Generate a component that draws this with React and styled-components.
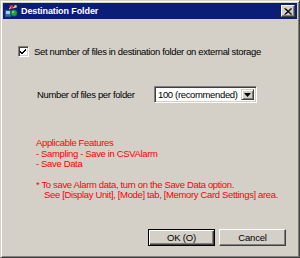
import React, { useState } from "react";
import styled, { createGlobalStyle } from "styled-components";

const GlobalStyle = createGlobalStyle`
  html, body {
    margin: 0;
    padding: 0;
    background: #d4d0c8;
  }
  body {
    font-family: "Liberation Sans", Arial, sans-serif;
    font-size: 9.5px;
    letter-spacing: -0.35px;
  }
`;

const Window = styled.div`
  box-sizing: border-box;
  width: 300px;
  height: 258px;
  background: #d4d0c8;
  border-top: 1px solid #d4d0c8;
  border-left: 1px solid #d4d0c8;
  border-right: 1px solid #404040;
  border-bottom: 1px solid #404040;
  box-shadow: inset 1px 1px 0 #ffffff, inset -1px -1px 0 #808080;
  padding: 2px;
  display: flex;
  flex-direction: column;
`;

const TitleBar = styled.div`
  height: 16px;
  background: #0a1e78;
  display: flex;
  align-items: center;
  padding: 0 1px 0 1px;
  gap: 3px;
`;

const Title = styled.div`
  flex: 1;
  color: #ffffff;
  font-family: "Liberation Sans", Tahoma, sans-serif;
  font-weight: bold;
  font-size: 9px;
  letter-spacing: -0.1px;
`;

const CloseButton = styled.div`
  box-sizing: border-box;
  width: 14px;
  height: 12px;
  background: #d4d0c8;
  border-top: 1px solid #ffffff;
  border-left: 1px solid #ffffff;
  border-right: 1px solid #404040;
  border-bottom: 1px solid #404040;
  box-shadow: inset -1px -1px 0 #808080;
  display: flex;
  align-items: center;
  justify-content: center;
  margin-right: 1px;
`;

const Body = styled.div`
  flex: 1;
  display: flex;
  flex-direction: column;
  padding: 26px 0 0 15px;
  color: #000000;
`;

const CheckRow = styled.label`
  display: flex;
  align-items: center;
  gap: 5px;
  height: 13px;
  white-space: nowrap;
`;

const CheckBox = styled.div`
  box-sizing: border-box;
  width: 11px;
  height: 11px;
  background: #ffffff;
  border-top: 1px solid #808080;
  border-left: 1px solid #808080;
  border-right: 1px solid #ffffff;
  border-bottom: 1px solid #ffffff;
  box-shadow: inset 1px 1px 0 #404040, inset -1px -1px 0 #d4d0c8;
  display: flex;
  align-items: center;
  justify-content: center;
`;

const FieldRow = styled.div`
  display: flex;
  align-items: center;
  margin: 28px 0 0 19px;
  height: 17px;
`;

const FieldLabel = styled.div`
  width: 117px;
  white-space: nowrap;
`;

const Select = styled.div`
  box-sizing: border-box;
  width: 103px;
  height: 17px;
  background: #ffffff;
  border-top: 1px solid #808080;
  border-left: 1px solid #808080;
  border-right: 1px solid #ffffff;
  border-bottom: 1px solid #ffffff;
  box-shadow: inset 1px 1px 0 #404040, inset -1px -1px 0 #d4d0c8;
  display: flex;
  align-items: center;
  padding: 2px 2px 2px 3px;
`;

const SelectText = styled.div`
  flex: 1;
  white-space: nowrap;
`;

const DropButton = styled.div`
  box-sizing: border-box;
  width: 13px;
  height: 11px;
  background: #d4d0c8;
  border-top: 1px solid #d4d0c8;
  border-left: 1px solid #d4d0c8;
  border-right: 1px solid #404040;
  border-bottom: 1px solid #404040;
  box-shadow: inset 1px 1px 0 #ffffff, inset -1px -1px 0 #808080;
  display: flex;
  align-items: center;
  justify-content: center;
`;

const Notes = styled.div`
  margin: 35px 0 0 18px;
  color: #ff0000;
  line-height: 10.5px;
`;

const NoteLine = styled.div`
  padding-left: ${(p) => (p.$indent ? "8px" : "0")};
  margin-top: ${(p) => (p.$gap ? "10px" : "0")};
  white-space: nowrap;
`;

const Footer = styled.div`
  display: flex;
  justify-content: flex-end;
  gap: 4px;
  padding: 0 11px 9px 0;
  margin-top: auto;
`;

const Button = styled.button`
  box-sizing: border-box;
  width: 67px;
  height: 17px;
  padding: 0;
  font-family: "Liberation Sans", Arial, sans-serif;
  font-size: 9.5px;
  letter-spacing: -0.2px;
  color: #000000;
  background: #d4d0c8;
  border: 1px solid;
  border-color: ${(p) =>
    p.$default ? "#000000" : "#ffffff #404040 #404040 #ffffff"};
  box-shadow: ${(p) =>
    p.$default
      ? "inset 1px 1px 0 #ffffff, inset -1px -1px 0 #404040, inset -2px -2px 0 #808080"
      : "inset -1px -1px 0 #808080"};
`;

const AppIcon = () => (
  <svg width="14" height="14" viewBox="0 0 14 14">
    <rect x="1" y="6" width="6" height="7" fill="#3a6ea5" stroke="#1c3a6a" strokeWidth="0.8" />
    <rect x="2" y="7" width="4" height="3" fill="#a8c8f0" />
    <circle cx="10" cy="9" r="3.2" fill="#20a040" stroke="#0c5c20" strokeWidth="0.6" />
    <circle cx="9" cy="8" r="1" fill="#90e090" />
    <circle cx="7.5" cy="3" r="2" fill="#e83030" />
    <circle cx="11.5" cy="2.5" r="1.4" fill="#f0c020" />
    <path d="M5 5 L7 3.5 M9 4 L11 3" stroke="#ffffff" strokeWidth="0.8" />
  </svg>
);

const CloseGlyph = () => (
  <svg width="8" height="7" viewBox="0 0 8 7">
    <path d="M0.5 0.5 L7 6.5 M1.5 0.5 L8 6.5 M7 0.5 L0.5 6.5 M8 0.5 L1.5 6.5" stroke="#000" strokeWidth="1" />
  </svg>
);

const Tick = () => (
  <svg width="7" height="7" viewBox="0 0 7 7">
    <path d="M0 3 L2 5 L6 1 M0 4 L2 6 L6 2" stroke="#000" strokeWidth="1" fill="none" />
  </svg>
);

const Arrow = () => (
  <svg width="7" height="4" viewBox="0 0 7 4">
    <path d="M0 0 H7 L3.5 4 Z" fill="#000" />
  </svg>
);

export default function App() {
  const [checked, setChecked] = useState(true);

  return (
    <>
      <GlobalStyle />
      <Window>
        <TitleBar>
          <AppIcon />
          <Title>Destination Folder</Title>
          <CloseButton>
            <CloseGlyph />
          </CloseButton>
        </TitleBar>
        <Body>
          <CheckRow onClick={() => setChecked(!checked)}>
            <CheckBox>{checked && <Tick />}</CheckBox>
            Set number of files in destination folder on external storage
          </CheckRow>
          <FieldRow>
            <FieldLabel>Number of files per folder</FieldLabel>
            <Select>
              <SelectText>100 (recommended)</SelectText>
              <DropButton>
                <Arrow />
              </DropButton>
            </Select>
          </FieldRow>
          <Notes>
            <NoteLine>Applicable Features</NoteLine>
            <NoteLine>- Sampling - Save in CSVAlarm</NoteLine>
            <NoteLine>- Save Data</NoteLine>
            <NoteLine $gap>* To save Alarm data, turn on the Save Data option.</NoteLine>
            <NoteLine $indent>See [Display Unit], [Mode] tab, [Memory Card Settings] area.</NoteLine>
          </Notes>
          <Footer>
            <Button $default>OK (O)</Button>
            <Button>Cancel</Button>
          </Footer>
        </Body>
      </Window>
    </>
  );
}
